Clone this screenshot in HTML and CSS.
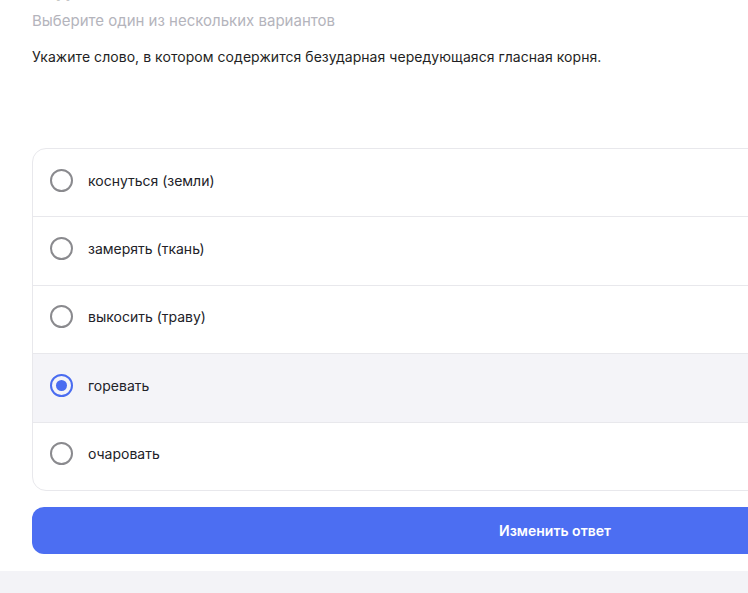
FILE: index.html
```html
<!DOCTYPE html>
<html lang="ru">
<head>
<meta charset="utf-8">
<link rel="stylesheet" href="styles.css">
</head>
<body>
<main class="panel">
  <h2 class="task-title">Задание 5</h2>
  <p class="hint">Выберите один из нескольких вариантов</p>
  <p class="question">Укажите слово, в котором содержится безударная чередующаяся гласная корня.</p>
  <ul class="options">
    <li class="option"><span class="radio"></span><span class="label">коснуться (земли)</span></li>
    <li class="option"><span class="radio"></span><span class="label">замерять (ткань)</span></li>
    <li class="option"><span class="radio"></span><span class="label">выкосить (траву)</span></li>
    <li class="option selected"><span class="radio"></span><span class="label">горевать</span></li>
    <li class="option"><span class="radio"></span><span class="label">очаровать</span></li>
  </ul>
  <button class="submit">Изменить ответ</button>
</main>
<footer class="page-bottom"></footer>
</body>
</html>
```
FILE: styles.css
```css
html, body {
  margin: 0;
  padding: 0;
  overflow: hidden;
  background: #f3f3f7;
}
body {
  font-family: Inter, "Noto Sans", sans-serif;
  color: #1f1f24;
  width: 1200px;
}
.panel {
  background: #fff;
  padding: 0 122px 17px 32px;
  width: 1046px;
}
.task-title {
  margin: -24px 0 0;
  font-size: 20px;
  line-height: 28px;
  font-weight: 700;
}
.hint {
  margin: 7px 0 0;
  font-size: 15px;
  line-height: 20px;
  color: #b4b4bc;
}
.question {
  margin: 16px 0 0;
  font-size: 14px;
  line-height: 20px;
  letter-spacing: 0.05px;
  color: #1f1f24;
}
.options {
  list-style: none;
  margin: 81px 0 0;
  padding: 0;
  border: 1px solid #e8e8ec;
  border-radius: 14px;
  overflow: hidden;
}
.option {
  display: flex;
  align-items: center;
  gap: 15px;
  height: 62.5px;
  padding: 0 0 5px 17px;
  border-top: 1px solid #e8e8ec;
  font-size: 14px;
}
.option:first-child {
  border-top: none;
  height: 62px;
}
.option.selected {
  background: #f4f4f8;
}
.radio {
  box-sizing: border-box;
  width: 23px;
  height: 23px;
  border: 2px solid #8a8a8e;
  border-radius: 50%;
  display: flex;
  align-items: center;
  justify-content: center;
}
.selected .radio {
  border-color: #4a6cf0;
}
.selected .radio::after {
  content: "";
  width: 11px;
  height: 11px;
  border-radius: 50%;
  background: #4a6cf0;
}
.label {
  color: #222228;
}
.submit {
  display: block;
  width: 100%;
  margin-top: 16px;
  height: 47px;
  border: none;
  border-radius: 12px;
  background: #4c6ef2;
  color: #fff;
  font-family: Inter, "Noto Sans", sans-serif;
  font-size: 14px;
  font-weight: 600;
}
.page-bottom {
  height: 40px;
}
```
